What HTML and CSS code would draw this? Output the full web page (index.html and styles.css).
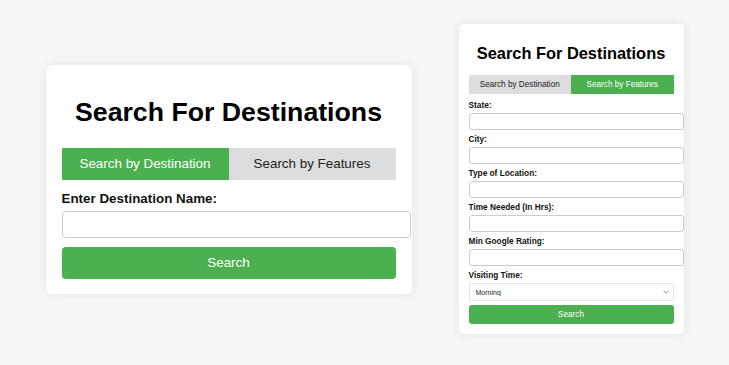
FILE: index.html
```html
<!DOCTYPE html>
<html lang="en">
<head>
<meta charset="utf-8">
<title>Search For Destinations</title>
<link rel="stylesheet" href="styles.css">
</head>
<body>
<main class="stage">
  <section class="card card-lg">
    <h1 class="title">Search For Destinations</h1>
    <div class="tabs">
      <button class="tab active">Search by Destination</button>
      <button class="tab">Search by Features</button>
    </div>
    <form class="form">
      <label class="label" for="dest">Enter Destination Name:</label>
      <input class="input" id="dest" type="text">
      <button class="submit" type="button">Search</button>
    </form>
  </section>

  <section class="card card-sm">
    <h1 class="title">Search For Destinations</h1>
    <div class="tabs">
      <button class="tab">Search by Destination</button>
      <button class="tab active">Search by Features</button>
    </div>
    <form class="form">
      <div class="field">
        <label class="label" for="state">State:</label>
        <input class="input" id="state" type="text">
      </div>
      <div class="field">
        <label class="label" for="city">City:</label>
        <input class="input" id="city" type="text">
      </div>
      <div class="field">
        <label class="label" for="type">Type of Location:</label>
        <input class="input" id="type" type="text">
      </div>
      <div class="field">
        <label class="label" for="time">Time Needed (In Hrs):</label>
        <input class="input" id="time" type="text">
      </div>
      <div class="field">
        <label class="label" for="rating">Min Google Rating:</label>
        <input class="input" id="rating" type="text">
      </div>
      <div class="field field-last">
        <label class="label" for="visit">Visiting Time:</label>
        <div class="select-wrap">
          <select class="select" id="visit">
            <option>Morning</option>
            <option>Afternoon</option>
            <option>Evening</option>
          </select>
          <svg class="chevron" width="6" height="4" viewBox="0 0 6 4" aria-hidden="true">
            <path d="M0.5 0.7 L3 3.2 L5.5 0.7" fill="none" stroke="#777" stroke-width="0.9"/>
          </svg>
        </div>
      </div>
      <button class="submit" type="button">Search</button>
    </form>
  </section>
</main>
</body>
</html>
```

FILE: styles.css
```css
* { box-sizing: border-box; }

html, body {
  margin: 0;
  padding: 0;
}

body {
  background: #f6f6f6;
  font-family: "Liberation Sans", Arial, sans-serif;
  color: #000;
}

.stage {
  height: 365px;
  padding-bottom: 7px;
  display: flex;
  justify-content: center;
  align-items: center;
  gap: 47px;
}

.card {
  background: #fff;
  border-radius: 6px;
  box-shadow: 0 0 10px rgba(0, 0, 0, 0.08);
}

.title {
  font-weight: bold;
  text-align: center;
  margin: 0;
}

.tabs {
  display: flex;
}

.tab {
  flex: 1;
  border: none;
  margin: 0;
  padding: 0;
  background: #ddd;
  color: #222;
  font-family: inherit;
}

.tab.active {
  background: #4caf50;
  color: #fff;
}

.form {
  display: flex;
  flex-direction: column;
}

.label {
  display: block;
  font-weight: bold;
  color: #111;
}

.input {
  display: block;
  background: #fff;
  border: 1px solid #ccc;
  border-radius: 4px;
  box-sizing: content-box;
}

.submit {
  border: none;
  background: #4caf50;
  color: #fff;
  font-family: inherit;
  padding: 0;
}

/* large card */
.card-lg {
  width: 366px;
  height: 229px;
  padding: 16px;
}

.card-lg .title {
  font-size: 26.7px;
  line-height: 32px;
  margin: 15px 0 20px;
}

.card-lg .tab {
  height: 32px;
  font-size: 13.4px;
}

.card-lg .label {
  font-size: 13.4px;
  line-height: 18px;
  margin: 10px 0 3px;
}

.card-lg .input {
  width: 100%;
  height: 25px;
  padding: 0 7px 0 6px;
}

.card-lg .submit {
  margin-top: 9px;
  height: 32px;
  font-size: 13.4px;
  border-radius: 4px;
}

/* small card */
.card-sm {
  width: 225px;
  padding: 10px;
  border-radius: 5px;
}

.card-sm .title {
  font-size: 16.4px;
  line-height: 20px;
  margin: 9px 0 12px;
}

.card-sm .tab {
  height: 19px;
  font-size: 8.2px;
}

.card-sm .form {
  padding-top: 6px;
}

.card-sm .field {
  display: flex;
  flex-direction: column;
  margin-bottom: 4px;
}

.card-sm .field-last {
  margin-bottom: 4px;
}

.card-sm .label {
  font-size: 8.3px;
  line-height: 11px;
  margin-bottom: 2px;
}

.card-sm .input {
  width: 100%;
  height: 15px;
  padding: 0 4px;
  border-radius: 3px;
}

.select-wrap {
  position: relative;
  height: 18px;
}

.card-sm .select {
  appearance: none;
  -webkit-appearance: none;
  display: block;
  width: 100%;
  height: 18px;
  margin: 0;
  font-family: inherit;
  font-size: 7px;
  color: #222;
  border: 1px solid #e3e3e3;
  border-radius: 2px;
  background: #fff;
  padding: 0 6px;
}

.chevron {
  position: absolute;
  right: 5px;
  top: 7px;
  pointer-events: none;
}

.card-sm .submit {
  height: 19px;
  font-size: 8.2px;
  border-radius: 3px;
}
```
